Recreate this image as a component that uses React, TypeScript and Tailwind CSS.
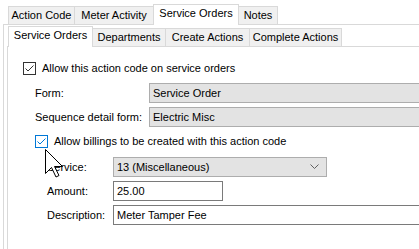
import React from 'react';

const outerTabs = [
  { label: 'Action Code', w: 'w-[67px]' },
  { label: 'Meter Activity', w: 'w-[80px]' },
  { label: 'Service Orders', w: 'w-[86px]', active: true },
  { label: 'Notes', w: 'w-[40px]' },
];

const innerTabs = [
  { label: 'Service Orders', w: 'w-[85px]', active: true },
  { label: 'Departments', w: 'w-[74px]' },
  { label: 'Create Actions', w: 'w-[85px]' },
  { label: 'Complete Actions', w: 'w-[93px]' },
];

const Tab = ({ label, w, active }: { label: string; w: string; active?: boolean }) => (
  <div
    className={
      active
        ? `${w} h-[21px] -ml-px -mb-px bg-white border border-b-0 border-[#d9d9d9] flex items-start justify-center pt-[3px] relative z-10`
        : `${w} h-[18px] -ml-px bg-[#f0f0f0] border border-b-0 border-[#d9d9d9] flex items-center justify-center`
    }
  >
    {label}
  </div>
);

// 체크박스
const CheckBox = ({ hover }: { hover?: boolean }) => (
  <div
    className={`w-[13px] h-[13px] bg-white border ${hover ? 'border-[#0078d7]' : 'border-[#333333]'} flex items-center justify-center`}
  >
    <svg width="11" height="11" viewBox="0 0 11 11">
      <polyline
        points="1.5,5.5 4,8 9.5,2.5"
        fill="none"
        stroke={hover ? '#0078d7' : '#333333'}
        strokeWidth="1"
      />
    </svg>
  </div>
);

export default function App() {
  return (
    <div className="w-[419px] h-[249px] bg-white overflow-hidden relative text-[11px] text-black font-['Liberation_Sans',Arial,sans-serif] leading-none">
      {/* 바깥 탭 */}
      <div className="flex items-end h-[24px] pl-[9px]">
        {outerTabs.map((t) => (
          <Tab key={t.label} {...t} />
        ))}
      </div>

      <div className="ml-[3px] border-l border-t border-[#d9d9d9] h-[225px] pl-[3px]">
        {/* 안쪽 탭 */}
        <div className="flex items-end h-[21px] pl-[2px]">
          {innerTabs.map((t) => (
            <Tab key={t.label} {...t} />
          ))}
        </div>

        <div className="border-l border-t border-[#d9d9d9] h-[210px] flex flex-col">
          <div className="flex items-center h-[13px] mt-[15px] pl-[15px] gap-[6px]">
            <CheckBox />
            <span>Allow this action code on service orders</span>
          </div>

          <div className="flex items-center h-[20px] mt-[8px] pl-[27px]">
            <span className="w-[114px] shrink-0">Form:</span>
            <div className="w-[280px] shrink-0 h-[20px] bg-[#e3e3e3] border border-[#adadad] flex items-center pl-[3px]">
              Service Order
            </div>
          </div>

          <div className="flex items-center h-[20px] mt-[4px] pl-[27px]">
            <span className="w-[114px] shrink-0">Sequence detail form:</span>
            <div className="w-[280px] shrink-0 h-[20px] bg-[#e3e3e3] border border-[#adadad] flex items-center pl-[3px]">
              Electric Misc
            </div>
          </div>

          <div className="flex items-center h-[13px] mt-[8px] pl-[27px] gap-[6px]">
            <CheckBox hover />
            <span>Allow billings to be created with this action code</span>
          </div>

          <div className="flex items-center h-[20px] mt-[9px] pl-[39px]">
            <span className="w-[66px] shrink-0">Service:</span>
            <div className="w-[214px] shrink-0 h-[20px] bg-[#e3e3e3] border border-[#adadad] flex items-center justify-between pl-[3px] pr-[7px]">
              <span>13 (Miscellaneous)</span>
              <svg width="9" height="6" viewBox="0 0 9 6">
                <polyline points="0.5,0.5 4.5,4.5 8.5,0.5" fill="none" stroke="#606060" strokeWidth="1" />
              </svg>
            </div>
          </div>

          <div className="flex items-center h-[20px] mt-[4px] pl-[39px]">
            <span className="w-[66px] shrink-0">Amount:</span>
            <div className="w-[110px] shrink-0 h-[20px] bg-white border border-[#7a7a7a] flex items-center pl-[3px]">
              25.00
            </div>
          </div>

          <div className="flex items-center h-[20px] mt-[4px] pl-[39px]">
            <span className="w-[66px] shrink-0">Description:</span>
            <div className="w-[320px] shrink-0 h-[20px] bg-white border border-[#7a7a7a] flex items-center pl-[3px]">
              Meter Tamper Fee
            </div>
          </div>
        </div>
      </div>

      {/* 마우스 커서 */}
      <svg className="absolute left-[45px] top-[149px]" width="19" height="30" viewBox="0 0 19 30">
        <polygon
          points="0.5,0.5 0.5,24.5 6.5,18.5 11,28 14,26.5 9.5,17.5 17.5,17.5"
          fill="white"
          stroke="black"
          strokeWidth="1"
          strokeLinejoin="miter"
        />
      </svg>
    </div>
  );
}
